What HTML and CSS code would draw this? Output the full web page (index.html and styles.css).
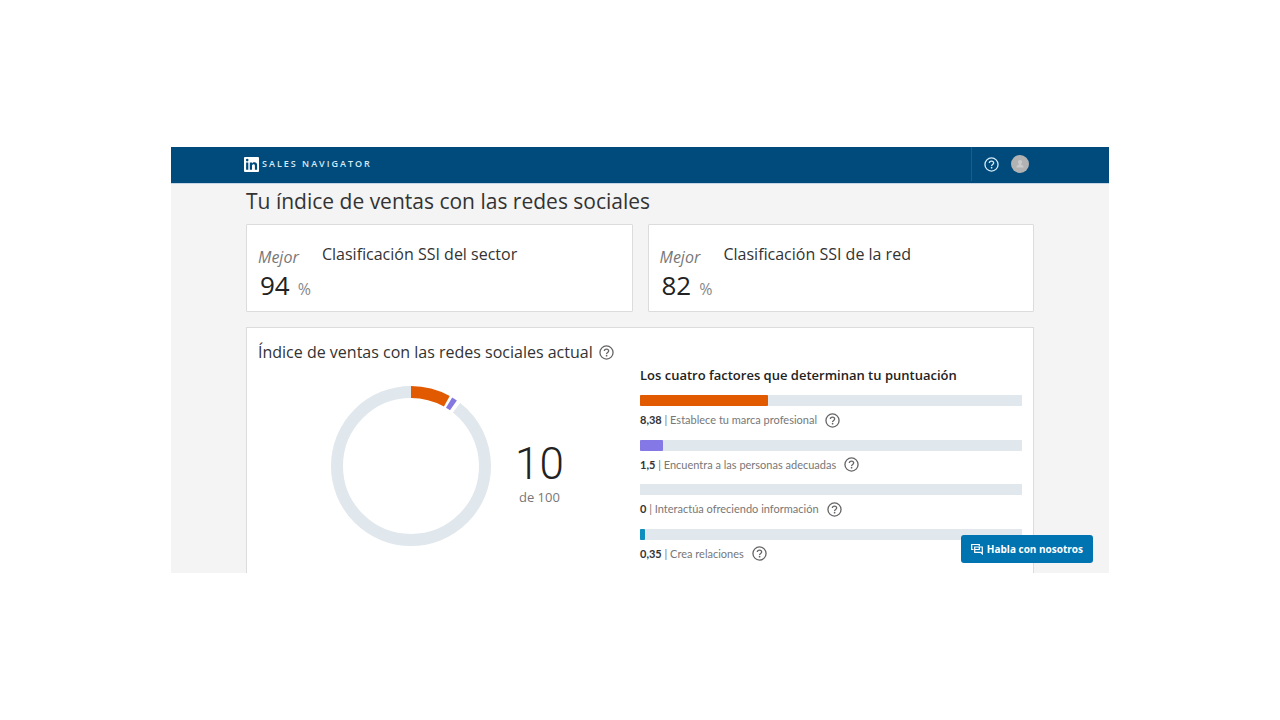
FILE: index.html
```html
<!DOCTYPE html>
<html lang="es">
<head>
<meta charset="utf-8">
<meta name="viewport" content="width=device-width, initial-scale=1">
<title>Sales Navigator</title>
<link rel="stylesheet" href="styles.css">
</head>
<body>
<svg class="defs" aria-hidden="true">
  <symbol id="help" viewBox="0 0 16 16">
    <circle cx="8" cy="8" r="7" fill="none" stroke="currentColor" stroke-width="1.4"/>
    <path d="M5.7 6.5C5.7 5.1 6.6 4.3 8 4.3s2.3.8 2.3 2c0 1.6-2.2 1.6-2.2 3.2" fill="none" stroke="currentColor" stroke-width="1.4"/>
    <circle cx="8.1" cy="11.4" r=".9" fill="currentColor"/>
  </symbol>
</svg>
<div class="app">
  <header class="topbar">
    <a class="brand" href="#">
      <svg class="brand-logo" viewBox="0 0 15 15" aria-hidden="true">
        <rect width="15" height="15" rx="1" fill="#fff"/>
        <circle cx="3.2" cy="3.100" r="1.300" fill="#004b7c"/>
        <path d="M2.100 5.400h2.200v7.400H2.100zM5.800 5.400H8v1c.5-.8 1.400-1.200 2.300-1.200 1.900 0 2.800 1.200 2.800 3.100v4.500h-2.200V8.800c0-1-.5-1.600-1.300-1.600S8 7.800 8 8.800v4H5.800z" fill="#004b7c"/>
      </svg>
      <span class="brand-name">SALES NAVIGATOR</span>
    </a>
    <div class="tools">
      <button class="help help-top" aria-label="Ayuda"><svg><use href="#help"/></svg></button>
      <button class="avatar" aria-label="Perfil">
        <svg viewBox="0 0 18 18"><circle cx="9" cy="9" r="9" fill="#b2b2b2"/><path d="M9 5c1.300 0 2 .9 2 2s-.6 1.700-1.100 2.200l2.500 1.800v1.500H5.600V11l2.500-1.800C7.600 8.700 7 8.100 7 7s.7-2 2-2z" fill="#c9cacc"/></svg>
      </button>
    </div>
  </header>
  <main class="content">
    <h1 class="title">Tu índice de ventas con las redes sociales</h1>
    <div class="ranks">
      <section class="card">
        <div class="rank"><em class="rank-label">Mejor</em><p class="rank-value"><span class="number">94</span> <span class="unit">%</span></p></div>
        <h2 class="card-title">Clasificación SSI del sector</h2>
      </section>
      <section class="card">
        <div class="rank"><em class="rank-label">Mejor</em><p class="rank-value"><span class="number">82</span> <span class="unit">%</span></p></div>
        <h2 class="card-title">Clasificación SSI de la red</h2>
      </section>
    </div>
    <section class="panel">
      <div class="index">
        <h2 class="index-title">Índice de ventas con las redes sociales actual <button class="help" aria-label="Más información"><svg><use href="#help"/></svg></button></h2>
        <div class="score">
          <svg class="donut" viewBox="0 0 160 160" role="img" aria-label="10 de 100">
            <g fill="none" stroke-width="12" transform="rotate(-90 80 80)">
              <circle cx="80" cy="80" r="74" stroke="#e0e7ed" pathLength="360" stroke-dasharray="322 38" stroke-dashoffset="-38"/>
              <circle cx="80" cy="80" r="74" stroke="#e25a00" pathLength="360" stroke-dasharray="29 331"/>
              <circle cx="80" cy="80" r="74" stroke="#8478e0" pathLength="360" stroke-dasharray="4 356" stroke-dashoffset="-31"/>
            </g>
          </svg>
          <p class="total"><span class="total-value">10</span><span class="total-max">de 100</span></p>
        </div>
      </div>
      <div class="factors">
        <h3 class="factors-title">Los cuatro factores que determinan tu puntuación</h3>
        <ul class="factor-list">
          <li><div class="bar"><div class="fill brand-fill" style="width:33.5%"></div></div><p class="factor"><span><b>8,38</b> | Establece tu marca profesional</span><button class="help" aria-label="Más información"><svg><use href="#help"/></svg></button></p></li>
          <li><div class="bar"><div class="fill people-fill" style="width:6%"></div></div><p class="factor"><span><b>1,5</b> | Encuentra a las personas adecuadas</span><button class="help" aria-label="Más información"><svg><use href="#help"/></svg></button></p></li>
          <li><div class="bar"><div class="fill" style="width:0%"></div></div><p class="factor"><span><b>0</b> | Interactúa ofreciendo información</span><button class="help" aria-label="Más información"><svg><use href="#help"/></svg></button></p></li>
          <li><div class="bar"><div class="fill relations-fill" style="width:1.4%"></div></div><p class="factor"><span><b>0,35</b> | Crea relaciones</span><button class="help" aria-label="Más información"><svg><use href="#help"/></svg></button></p></li>
        </ul>
      </div>
    </section>
  </main>
  <button class="chat">
    <svg viewBox="0 0 12 12" aria-hidden="true"><path d="M2.500 6.500H.7v-5h7.600V3M3.700 4h7.600v6.800L9.600 9.300H3.700zM3.700 6.500h4.600V4" fill="none" stroke="currentColor" stroke-width="1.200"/></svg>
    Habla con nosotros
  </button>
</div>
</body>
</html>
```
FILE: styles.css
```css
* { box-sizing: border-box; }
body {
  margin: 0;
  min-height: 100vh;
  padding: 147px 171px;
  display: flex;
  background: #fff;
  color: #333;
  font-family: "Open Sans", "Noto Sans", sans-serif;
}
h1, h2, h3, p, ul { margin: 0; padding: 0; font-weight: 400; }
ul { list-style: none; }
button { border: 0; padding: 0; background: none; color: inherit; font: inherit; cursor: pointer; }
.defs { position: absolute; width: 0; height: 0; }

.app {
  position: relative;
  flex: 1;
  display: flex;
  flex-direction: column;
  overflow: hidden;
  background: #f4f4f4;
}
.topbar {
  height: 37px;
  padding: 0 80px 2px 73px;
  display: flex;
  align-items: center;
  justify-content: space-between;
  background: #004b7c;
  border-bottom: 1px solid #c3d5e5;
}
.brand { display: flex; align-items: center; gap: 3px; color: #d5e9f7; text-decoration: none; }
.brand-logo { width: 15px; height: 15px; }
.brand-name { font-size: 9px; line-height: 16px; letter-spacing: 2px; font-weight: 600; }
.tools {
  align-self: stretch;
  display: flex;
  align-items: center;
  gap: 12px;
  padding-left: 12px;
  border-left: 1px solid #1a5c8a;
}
.help { width: 15px; height: 15px; display: inline-flex; color: #666; }
.help svg { width: 100%; height: 100%; }
.help-top { color: #d5ecfa; }
.avatar { width: 18px; height: 18px; display: flex; }

.content { flex: 1; display: flex; flex-direction: column; padding: 0 75px; }
.title { padding-bottom: 6px; font-size: 21px; line-height: 34px; }
.ranks { display: grid; grid-template-columns: 1fr 1fr; gap: 15px; margin-bottom: 15px; }
.card {
  display: flex;
  gap: 11px;
  min-height: 88px;
  padding: 17px 11px 5px;
  background: #fff;
  border: 1px solid #dcdcdc;
  border-radius: 1px;
}
.rank { padding-top: 4px; white-space: nowrap; }
.rank-label { display: block; font-size: 16px; line-height: 22px; color: #777; }
.rank-value { display: flex; align-items: baseline; gap: 8px; padding-left: 2px; line-height: 34px; }
.number { font-size: 26px; color: #222; }
.unit { font-size: 16px; color: #888; }
.card-title { font-size: 16px; line-height: 24px; }

.panel {
  flex: 1;
  display: flex;
  padding: 12px 11px 0;
  background: #fff;
  border: 1px solid #dcdcdc;
  border-bottom: 0;
}
.index { flex: 1; }
.index-title { display: flex; align-items: center; gap: 6px; font-size: 16px; line-height: 24px; white-space: nowrap; }
.score { display: flex; align-items: center; gap: 24px; padding: 22px 0 0 73px; }
.donut { width: 160px; height: 160px; }
.total { display: flex; flex-direction: column; align-items: center; padding-top: 14px; }
.total-value { font-family: Roboto, "Open Sans", sans-serif; font-size: 44px; font-weight: 300; line-height: 48px; color: #222; }
.total-max { font-size: 13px; line-height: 18px; color: #777; }

.factors { flex: 1; padding-top: 24px; }
.factors-title { font-size: 13px; line-height: 22px; font-weight: 600; color: #222; }
.factor-list { display: flex; flex-direction: column; justify-content: space-between; min-height: 167px; margin-top: 9px; }
.bar { height: 11px; background: #e0e7ed; }
.fill { height: 100%; border-radius: 1px; }
.brand-fill { background: #e25a00; }
.people-fill { background: #8478e6; }
.relations-fill { background: #0e8ebc; }
.factor {
  display: flex;
  align-items: center;
  gap: 8px;
  padding-top: 6px;
  font-family: Lato, "Open Sans", sans-serif;
  font-size: 11px;
  line-height: 16px;
  color: #777;
}
.factor b { color: #333; }

.chat {
  position: absolute;
  right: 16px;
  bottom: 10px;
  height: 28px;
  padding: 0 10px;
  display: flex;
  align-items: center;
  gap: 4px;
  border-radius: 3px;
  background: #0073b1;
  color: #fff;
  font-size: 10px;
  font-weight: 700;
  white-space: nowrap;
}
.chat svg { width: 12px; height: 12px; }
```
